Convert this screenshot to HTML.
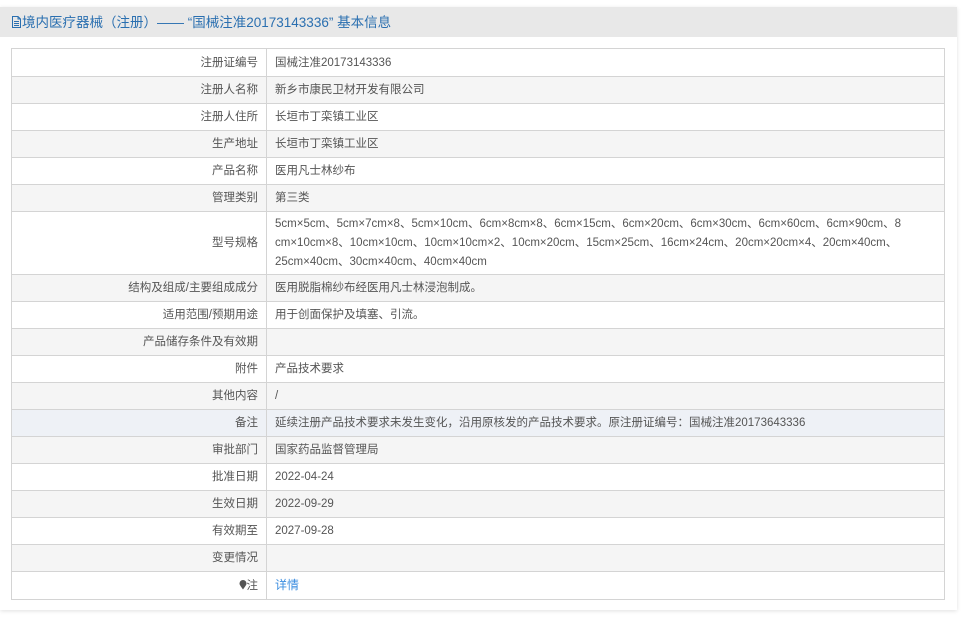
<!DOCTYPE html>
<html><head><meta charset="utf-8"><style>
body{margin:0;background:#fff;font-family:"Liberation Sans","Noto Sans CJK SC",sans-serif;font-size:11.5px;color:#555;}
.panel{position:absolute;left:0;top:7px;width:957px;height:603px;background:#fff;box-shadow:0 1px 4px rgba(0,0,0,.12);}
.hd{height:30px;background:#e8e8e8;color:#2a6fb0;font-size:13.5px;line-height:31px;padding-left:11px;}
table{position:absolute;left:11px;top:41px;width:934px;border-collapse:collapse;border:1px solid #ccc;}
td{border:1px solid #d4d4d4;height:26px;padding:0 8px;line-height:18px;}
td.k{width:238px;text-align:right;}
tr:nth-child(even) td{background:#f5f5f5;}
tr.hv td{background:#eef1f6;}
a{color:#3b8ee0;text-decoration:none;font-size:12px;}
</style></head><body>
<div class="panel">
<div class="hd"><svg width="11" height="12" viewBox="0 0 11 12" style="vertical-align:-1px"><path d="M1.5 .5h5.5l2.5 2.5v8.5h-8z M7 .5v2.5h2.5 M3 5.5h5 M3 7.5h5 M3 9.5h5" fill="none" stroke="#2a6fb0"/></svg>境内医疗器械（注册）—— “国械注准20173143336” 基本信息</div>
<table>
<tr><td class="k" style="height:27px">注册证编号</td><td>国械注准20173143336</td></tr>
<tr><td class="k">注册人名称</td><td>新乡市康民卫材开发有限公司</td></tr>
<tr><td class="k">注册人住所</td><td>长垣市丁栾镇工业区</td></tr>
<tr><td class="k">生产地址</td><td>长垣市丁栾镇工业区</td></tr>
<tr><td class="k">产品名称</td><td>医用凡士林纱布</td></tr>
<tr><td class="k">管理类别</td><td>第三类</td></tr>
<tr><td class="k" style="height:62px">型号规格</td><td style="white-space:nowrap;line-height:19px">5cm×5cm、5cm×7cm×8、5cm×10cm、6cm×8cm×8、6cm×15cm、6cm×20cm、6cm×30cm、6cm×60cm、6cm×90cm、8<br>cm×10cm×8、10cm×10cm、10cm×10cm×2、10cm×20cm、15cm×25cm、16cm×24cm、20cm×20cm×4、20cm×40cm、<br>25cm×40cm、30cm×40cm、40cm×40cm</td></tr>
<tr><td class="k">结构及组成/主要组成成分</td><td>医用脱脂棉纱布经医用凡士林浸泡制成。</td></tr>
<tr><td class="k">适用范围/预期用途</td><td>用于创面保护及填塞、引流。</td></tr>
<tr><td class="k">产品储存条件及有效期</td><td></td></tr>
<tr><td class="k">附件</td><td>产品技术要求</td></tr>
<tr><td class="k">其他内容</td><td>/</td></tr>
<tr class="hv"><td class="k">备注</td><td>延续注册产品技术要求未发生变化，沿用原核发的产品技术要求。原注册证编号：国械注准20173643336</td></tr>
<tr><td class="k">审批部门</td><td>国家药品监督管理局</td></tr>
<tr><td class="k">批准日期</td><td>2022-04-24</td></tr>
<tr><td class="k">生效日期</td><td>2022-09-29</td></tr>
<tr><td class="k">有效期至</td><td>2027-09-28</td></tr>
<tr><td class="k">变更情况</td><td></td></tr>
<tr><td class="k" style="height:27px"><svg width="8" height="10" viewBox="0 0 8 10" style="vertical-align:-1px"><path d="M4 9.5C1.5 6 .5 4.8.5 3.5a3.5 3.5 0 0 1 7 0C7.5 4.8 6.5 6 4 9.5z" fill="#555"/></svg>注</td><td><a>详情</a></td></tr>
</table>
</div>
</body></html>
